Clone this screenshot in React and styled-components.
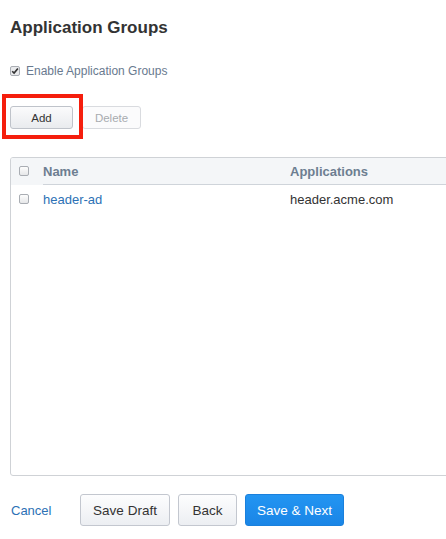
import React, { useState } from 'react';
import styled, { createGlobalStyle } from 'styled-components';

const GlobalStyle = createGlobalStyle`
  html, body {
    margin: 0;
    padding: 0;
    background: #fff;
    overflow: hidden;
  }
  body {
    font-family: "Liberation Sans", Arial, sans-serif;
    color: #333;
  }
`;

const Page = styled.div`
  box-sizing: border-box;
  padding: 18px 0 0 10px;
  width: 446px;
  height: 539px;
  overflow: hidden;
`;

const Title = styled.h1`
  margin: 0;
  font-size: 17px;
  line-height: 20px;
  font-weight: bold;
  color: #333;
`;

const CheckRow = styled.label`
  display: flex;
  align-items: center;
  gap: 6px;
  margin-top: 25px;
  font-size: 12px;
  color: #697a8f;
  height: 16px;
`;

const Box = styled.span`
  box-sizing: border-box;
  display: inline-flex;
  align-items: center;
  justify-content: center;
  width: 10px;
  height: 10px;
  border: 1px solid #a9adb3;
  border-radius: 2px;
  background: ${p => (p.checked ? '#e9eaec' : 'linear-gradient(#fdfdfd, #e6e7e9)')};
  flex-shrink: 0;
`;

const Toolbar = styled.div`
  position: relative;
  display: flex;
  gap: 9px;
  margin-top: 27px;
`;

const Highlight = styled.div`
  position: absolute;
  left: -8px;
  top: -12px;
  width: 81px;
  height: 45px;
  box-sizing: border-box;
  border: 4px solid #f51e0d;
  pointer-events: none;
`;

const SmallButton = styled.button`
  box-sizing: border-box;
  height: 23px;
  width: ${p => p.w}px;
  padding: 0;
  font-family: inherit;
  font-size: 11.5px;
  color: ${p => (p.disabled ? '#a8abb0' : '#333')};
  background: ${p => (p.disabled ? '#fbfbfc' : 'linear-gradient(#fbfbfc, #e9ebee)')};
  border: 1px solid ${p => (p.disabled ? '#d9dbdf' : '#bfc3ca')};
  border-radius: 3px;
`;

const TableBox = styled.div`
  margin-top: 28px;
  width: 470px;
  height: 319px;
  box-sizing: border-box;
  border: 1px solid #cfd2d6;
  border-radius: 3px;
  overflow: hidden;
`;

const Table = styled.table`
  width: 100%;
  border-collapse: collapse;
  font-size: 13px;
`;

const Th = styled.th`
  height: 26px;
  padding: 0;
  padding-left: ${p => p.pad || 0}px;
  text-align: left;
  font-weight: bold;
  color: #6d7e91;
  background: #f4f6f8;
  border-bottom: ${p => (p.noline ? 'none' : '1px solid #cfd4da')};
  width: ${p => (p.w ? `${p.w}px` : 'auto')};
`;

const Td = styled.td`
  height: 29px;
  padding: 0;
  padding-left: ${p => p.pad || 0}px;
  color: #333;
`;

const RowCheck = styled(Box)`
  width: 10px;
  height: 10px;
  margin-top: 2px;
`;

const Link = styled.a`
  color: #2c71b5;
  text-decoration: none;
  cursor: pointer;
`;

const Footer = styled.div`
  display: flex;
  align-items: center;
  margin-top: 18px;
`;

const CancelLink = styled(Link)`
  font-size: 13px;
  margin-left: 1px;
  width: 69px;
`;

const Buttons = styled.div`
  display: flex;
  gap: 8px;
`;

const Button = styled.button`
  box-sizing: border-box;
  height: 32px;
  width: ${p => p.w}px;
  padding: 0;
  font-family: inherit;
  font-size: 13.5px;
  border-radius: 3px;
  color: ${p => (p.primary ? '#fff' : '#333')};
  background: ${p => (p.primary ? 'linear-gradient(#2395f2, #1a85e6)' : 'linear-gradient(#fdfdfe, #eceef2)')};
  border: 1px solid ${p => (p.primary ? '#1a80dc' : '#c3c7cf')};
`;

const Check = () => (
  <svg width="8" height="8" viewBox="0 0 8 8">
    <path d="M1.2 4.2 L3.1 6.1 L6.9 1.4" fill="none" stroke="#333" strokeWidth="1.6" />
  </svg>
);

const App = () => {
  const [enabled] = useState(true);
  const groups = [{ id: 1, name: 'header-ad', apps: 'header.acme.com' }];

  return (
    <>
      <GlobalStyle />
      <Page>
        <Title>Application Groups</Title>
        <CheckRow>
          <Box checked={enabled}>{enabled && <Check />}</Box>
          Enable Application Groups
        </CheckRow>
        <Toolbar>
          <Highlight />
          <SmallButton w={63}>Add</SmallButton>
          <SmallButton w={59} disabled>Delete</SmallButton>
        </Toolbar>
        <TableBox>
          <Table>
            <thead>
              <tr>
                <Th w={24} pad={8} noline><RowCheck /></Th>
                <Th w={247}>Name</Th>
                <Th>Applications</Th>
              </tr>
            </thead>
            <tbody>
              {groups.map(g => (
                <tr key={g.id}>
                  <Td pad={8}><RowCheck /></Td>
                  <Td><Link>{g.name}</Link></Td>
                  <Td>{g.apps}</Td>
                </tr>
              ))}
            </tbody>
          </Table>
        </TableBox>
        <Footer>
          <CancelLink>Cancel</CancelLink>
          <Buttons>
            <Button w={90}>Save Draft</Button>
            <Button w={59}>Back</Button>
            <Button w={99} primary>Save &amp; Next</Button>
          </Buttons>
        </Footer>
      </Page>
    </>
  );
};

export default App;
